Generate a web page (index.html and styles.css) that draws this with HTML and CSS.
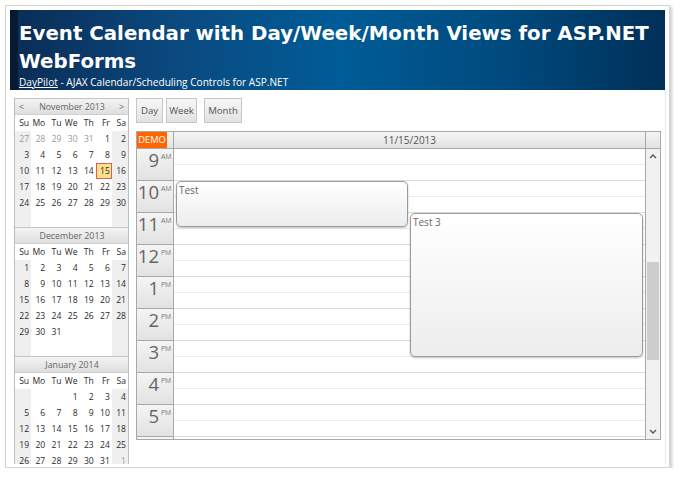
FILE: index.html
```html
<!DOCTYPE html>
<html>
<head>
<meta charset="utf-8">
<title>Event Calendar</title>
<link rel="stylesheet" href="styles.css">
</head>
<body>
<div class="frame">
  <header class="banner">
    <h1 class="title">Event Calendar with Day/Week/Month Views for ASP.NET WebForms</h1>
    <div class="sub"><a href="#">DayPilot</a> - AJAX Calendar/Scheduling Controls for ASP.NET</div>
  </header>
  <div class="main">
    <div class="nav">
      <div class="month">
        <div class="mhead"><span class="arr">&lt;</span><span>November 2013</span><span class="arr">&gt;</span></div>
        <div class="names"><span>Su</span><span>Mo</span><span>Tu</span><span>We</span><span>Th</span><span>Fr</span><span>Sa</span></div>
        <div class="days">
          <span class="o">27</span><span class="o">28</span><span class="o">29</span><span class="o">30</span><span class="o">31</span><span>1</span><span>2</span>
          <span>3</span><span>4</span><span>5</span><span>6</span><span>7</span><span>8</span><span>9</span>
          <span>10</span><span>11</span><span>12</span><span>13</span><span>14</span><span class="today">15</span><span>16</span>
          <span>17</span><span>18</span><span>19</span><span>20</span><span>21</span><span>22</span><span>23</span>
          <span>24</span><span>25</span><span>26</span><span>27</span><span>28</span><span>29</span><span>30</span>
        </div>
      </div>
      <div class="month">
        <div class="mhead"><span class="arr"></span><span>December 2013</span><span class="arr"></span></div>
        <div class="names"><span>Su</span><span>Mo</span><span>Tu</span><span>We</span><span>Th</span><span>Fr</span><span>Sa</span></div>
        <div class="days">
          <span>1</span><span>2</span><span>3</span><span>4</span><span>5</span><span>6</span><span>7</span>
          <span>8</span><span>9</span><span>10</span><span>11</span><span>12</span><span>13</span><span>14</span>
          <span>15</span><span>16</span><span>17</span><span>18</span><span>19</span><span>20</span><span>21</span>
          <span>22</span><span>23</span><span>24</span><span>25</span><span>26</span><span>27</span><span>28</span>
          <span>29</span><span>30</span><span>31</span>
        </div>
      </div>
      <div class="month">
        <div class="mhead"><span class="arr"></span><span>January 2014</span><span class="arr"></span></div>
        <div class="names"><span>Su</span><span>Mo</span><span>Tu</span><span>We</span><span>Th</span><span>Fr</span><span>Sa</span></div>
        <div class="days">
          <span class="start-we">1</span><span>2</span><span>3</span><span>4</span>
          <span>5</span><span>6</span><span>7</span><span>8</span><span>9</span><span>10</span><span>11</span>
          <span>12</span><span>13</span><span>14</span><span>15</span><span>16</span><span>17</span><span>18</span>
          <span>19</span><span>20</span><span>21</span><span>22</span><span>23</span><span>24</span><span>25</span>
          <span>26</span><span>27</span><span>28</span><span>29</span><span>30</span><span>31</span><span class="o">1</span>
        </div>
      </div>
    </div>

    <div class="cal-col">
      <div class="toolbar">
        <button class="btn btn-day">Day</button>
        <button class="btn btn-week">Week</button>
        <button class="btn btn-month">Month</button>
      </div>
      <div class="cal">
        <div class="cal-head">
          <div class="corner"><span class="demo">DEMO</span></div>
          <div class="colhead">11/15/2013</div>
          <div class="sc-head"></div>
        </div>
        <div class="cal-body">
          <div class="times">
            <div class="hour"><span class="hn">9</span><span class="ampm">AM</span></div>
            <div class="hour"><span class="hn">10</span><span class="ampm">AM</span></div>
            <div class="hour"><span class="hn">11</span><span class="ampm">AM</span></div>
            <div class="hour"><span class="hn">12</span><span class="ampm">PM</span></div>
            <div class="hour"><span class="hn">1</span><span class="ampm">PM</span></div>
            <div class="hour"><span class="hn">2</span><span class="ampm">PM</span></div>
            <div class="hour"><span class="hn">3</span><span class="ampm">PM</span></div>
            <div class="hour"><span class="hn">4</span><span class="ampm">PM</span></div>
            <div class="hour"><span class="hn">5</span><span class="ampm">PM</span></div>
            <div class="hour"><span class="hn">6</span><span class="ampm">PM</span></div>
          </div>
          <div class="grid">
            <div class="half"></div><div class="half end"></div>
            <div class="half"></div><div class="half end"></div>
            <div class="half"></div><div class="half end"></div>
            <div class="half"></div><div class="half end"></div>
            <div class="half"></div><div class="half end"></div>
            <div class="half"></div><div class="half end"></div>
            <div class="half"></div><div class="half end"></div>
            <div class="half"></div><div class="half end"></div>
            <div class="half"></div><div class="half end"></div>
            <div class="half"></div><div class="half end"></div>
            <div class="event ev-test">Test</div>
            <div class="event ev-test3">Test 3</div>
          </div>
          <div class="scroll">
            <svg class="chev" width="8" height="5" viewBox="0 0 8 5"><polyline points="1,4 4,1 7,4" fill="none" stroke="#555" stroke-width="1.4"/></svg>
            <div class="track"><div class="thumb"></div></div>
            <svg class="chev" width="8" height="5" viewBox="0 0 8 5"><polyline points="1,1 4,4 7,1" fill="none" stroke="#555" stroke-width="1.4"/></svg>
          </div>
        </div>
      </div>
    </div>
  </div>
</div>
</body>
</html>
```

FILE: styles.css
```css
html, body {
  margin: 0;
  padding: 0;
  background: #fff;
  font-family: "Open Sans", "Liberation Sans", sans-serif;
}

.frame {
  margin: 5px 0 0 5px;
  width: 656px;
  height: 454px;
  padding: 4px 3px 3px 4px;
  border: 1px solid #d4d4d4;
  box-shadow: 2px 2px 3px rgba(0, 0, 0, 0.2);
  overflow: hidden;
}

/* banner */
.banner {
  box-sizing: border-box;
  width: 655px;
  height: 80px;
  border-left: 8px solid #061a31;
  padding-left: 1px;
  color: #fff;
  background: linear-gradient(to right, #0b2d57 0%, #0a4a80 25%, #005c97 50%, #004a7e 75%, #003058 100%);
  overflow: hidden;
}

.title {
  margin: 0;
  padding-top: 9.6px;
  font-family: "DejaVu Sans", sans-serif;
  font-weight: bold;
  font-size: 19.8px;
  line-height: 28px;
}

.sub {
  font-size: 10.1px;
  line-height: 12px;
  padding-top: 0.2px;
}

.sub a {
  color: #fff;
  text-decoration: underline;
}

/* main area */
.main {
  box-sizing: border-box;
  width: 656px;
  height: 374px;
  padding: 8px 0 0 4px;
  display: flex;
  gap: 7px;
  border-right: 1px solid #e8e8e8;
  overflow: hidden;
}

/* navigator */
.nav {
  box-sizing: border-box;
  width: 115px;
  flex: none;
  border-left: 1px solid #bdbdbd;
  border-right: 1px solid #bdbdbd;
  font-size: 8.6px;
  color: #2a2a2a;
}

.month {
  border-top: 1px solid #c4c4c4;
}

.mhead {
  height: 15px;
  border-bottom: 1px solid #d0d0d0;
  background: linear-gradient(#f4f4f4, #dedede);
  display: flex;
  justify-content: space-between;
  align-items: center;
  padding: 0 3px 0 4px;
  color: #666;
  font-size: 8.8px;
}

.mhead .arr {
  width: 6px;
}

.names {
  display: grid;
  grid-template-columns: repeat(7, 1fr);
  height: 16px;
  background: #fff;
}

.names span,
.days span {
  text-align: right;
  padding-right: 2px;
  line-height: 16px;
  height: 16px;
}

.days {
  display: grid;
  grid-template-columns: repeat(7, 1fr);
  grid-auto-rows: 16px;
  height: 96px;
  background: linear-gradient(to right, #efefef 0, #efefef 14.2857%, #fff 14.2857%, #fff 85.7143%, #efefef 85.7143%);
}

.days .o {
  color: #999;
}

.days .start-we {
  grid-column-start: 4;
}

.days .today {
  box-sizing: border-box;
  background: #fde28e;
  border: 1px solid #e45a5a;
  line-height: 14px;
  padding-right: 1px;
}

/* calendar column */
.cal-col {
  display: flex;
  flex-direction: column;
}

.toolbar {
  display: flex;
  height: 25px;
  margin-bottom: 8px;
}

.btn {
  box-sizing: border-box;
  height: 25px;
  padding: 0;
  border: 1px solid #c6c6c6;
  background: linear-gradient(#f7f7f7, #e2e2e2);
  color: #555;
  font-family: "Open Sans", sans-serif;
  font-size: 9.6px;
  text-align: center;
}

.btn-day { width: 27px; margin-right: 3px; }
.btn-week { width: 31px; margin-right: 7px; }
.btn-month { width: 38px; }

.cal {
  box-sizing: border-box;
  width: 525px;
  border: 1px solid #a8a8a8;
}

.cal-head {
  display: flex;
  height: 16px;
  border-bottom: 1px solid #a8a8a8;
  background: linear-gradient(#f5f5f5, #e2e2e2);
}

.corner {
  box-sizing: border-box;
  width: 37px;
  border-right: 1px solid #a8a8a8;
}

.demo {
  display: block;
  width: 30px;
  height: 16px;
  background: #ff6600;
  color: #fff;
  font-size: 9.4px;
  line-height: 16px;
  text-align: center;
}

.colhead {
  width: 471px;
  text-align: center;
  color: #555;
  font-size: 10px;
  line-height: 16px;
}

.sc-head {
  flex: 1;
  border-left: 1px solid #a8a8a8;
}

.cal-body {
  display: flex;
  height: 290px;
  overflow: hidden;
}

.times {
  box-sizing: border-box;
  width: 37px;
  flex: none;
  border-right: 1px solid #a8a8a8;
}

.hour {
  height: 31px;
  border-bottom: 1px solid #a8a8a8;
  background: linear-gradient(#f4f4f4, #e2e2e2);
  display: flex;
  justify-content: flex-end;
  align-items: flex-start;
  padding-right: 1px;
  color: #666;
}

.hn {
  font-size: 18.5px;
  line-height: 22px;
}

.ampm {
  font-size: 6.8px;
  line-height: 8px;
  margin: 4px 0 0 2px;
  width: 11px;
  color: #777;
}

.grid {
  position: relative;
  width: 471px;
  flex: none;
  background: #fff;
}

.half {
  height: 15px;
  border-bottom: 1px solid #ececec;
}

.half.end {
  border-bottom-color: #dcdcdc;
}

.event {
  position: absolute;
  box-sizing: border-box;
  border: 1px solid #9a9a9a;
  border-radius: 5px;
  background: linear-gradient(#ffffff, #ededed);
  box-shadow: 0 1px 2px rgba(0, 0, 0, 0.25);
  color: #666;
  font-size: 10px;
  line-height: 14px;
  padding: 1px 2px;
}

.ev-test {
  left: 2px;
  top: 32px;
  width: 232px;
  height: 46px;
}

.ev-test3 {
  left: 236px;
  top: 64px;
  width: 233px;
  height: 144px;
}

.scroll {
  flex: 1;
  border-left: 1px solid #a8a8a8;
  background: #f1f1f1;
  display: flex;
  flex-direction: column;
  align-items: center;
}

.chev {
  display: block;
  margin: 5px 0;
  flex: none;
}

.track {
  flex: 1;
  width: 100%;
  position: relative;
}

.thumb {
  position: absolute;
  left: 1px;
  right: 1px;
  top: 98px;
  height: 98px;
  background: #cdcdcd;
}
```
